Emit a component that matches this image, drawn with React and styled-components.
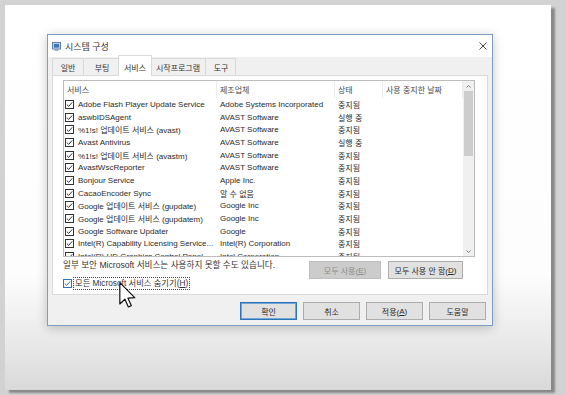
import React from "react";
import styled, { createGlobalStyle } from "styled-components";

const GlobalStyle = createGlobalStyle`
  html, body {
    margin: 0;
    padding: 0;
  }
  body {
    width: 565px;
    height: 395px;
    overflow: hidden;
    background: #d0d0d0;
    font-family: "Liberation Sans", "Noto Sans CJK KR", sans-serif;
  }
`;

const Screen = styled.div`
  width: 565px;
  height: 395px;
  box-sizing: border-box;
  padding: 5px 0 0 5px;
  background: #d2d2d2;
`;

const Page = styled.div`
  position: relative;
  width: 546px;
  height: 385px;
  box-sizing: border-box;
  padding: 29px 0 0 42px;
  background: linear-gradient(
    to bottom,
    #ffffff 0%,
    #fdfdfd 70%,
    #e6e6e6 90%,
    #d9d9d9 100%
  );
  box-shadow: 4px 3px 2px rgba(0, 0, 0, 0.35);
`;

const Dialog = styled.div`
  width: 446px;
  height: 292px;
  box-sizing: border-box;
  border: 1px solid #7f9dc3;
  background: #f0f0f0;
  box-shadow: 0 2px 10px rgba(0, 0, 0, 0.22);
  display: flex;
  flex-direction: column;
  font-size: 8px;
  color: #2a2a2a;
`;

const TitleBar = styled.div`
  height: 22px;
  flex: none;
  background: #fff;
  display: flex;
  align-items: center;
  gap: 4px;
  padding: 0 5px 0 4px;
`;

const Title = styled.span`
  flex: 1;
  font-size: 9px;
  color: #333;
`;

const Body = styled.div`
  flex: 1;
  display: flex;
  flex-direction: column;
  padding: 1px 4px 0;
`;

const TabStrip = styled.div`
  display: flex;
  align-items: flex-end;
  height: 20px;
  margin-top: -2px;
  margin-bottom: -1px;
  position: relative;
  z-index: 1;
`;

const Tab = styled.div`
  box-sizing: border-box;
  width: ${(p) => p.$w}px;
  height: ${(p) => (p.$active ? 21 : 17)}px;
  margin: 0 ${(p) => (p.$active ? -2 : 0)}px ${(p) => (p.$active ? 0 : 1)}px;
  padding-top: ${(p) => (p.$active ? 3 : 1)}px;
  display: flex;
  align-items: center;
  justify-content: center;
  background: ${(p) => (p.$active ? "#fff" : "#f0f0f0")};
  border: 1px solid #d9d9d9;
  border-bottom: none;
  border-left-color: ${(p) => (p.$active || p.$first ? "#d9d9d9" : "transparent")};
  position: relative;
  z-index: ${(p) => (p.$active ? 2 : 1)};
  color: #333;
`;

const TabPage = styled.div`
  height: 220px;
  box-sizing: border-box;
  background: #fff;
  border: 1px solid #d9d9d9;
  padding: 4px 12px 0 10px;
  display: flex;
  flex-direction: column;
`;

const ListBox = styled.div`
  height: 177px;
  box-sizing: border-box;
  border: 1px solid #bcbcbc;
  display: flex;
  overflow: hidden;
`;

const ListContent = styled.div`
  flex: 1;
  overflow: hidden;
`;

const Row = styled.div`
  display: grid;
  grid-template-columns: 153px 118px 48px 1fr;
  height: ${(p) => (p.$header ? 17 : 12.7)}px;
  align-items: center;
  white-space: nowrap;
  color: ${(p) => (p.$header ? "#4a4a4a" : "#2a2a2a")};
`;

const HeadCell = styled.div`
  height: 100%;
  display: flex;
  align-items: center;
  padding-left: 3px;
  border-right: 1px solid #ececec;
  box-sizing: border-box;
`;

const Cell = styled.div`
  display: flex;
  align-items: center;
  gap: 4px;
  padding-left: ${(p) => (p.$first ? 1 : 3)}px;
  overflow: hidden;
`;

const Scrollbar = styled.div`
  width: 11px;
  flex: none;
  background: #f0f0f0;
  display: flex;
  flex-direction: column;
  align-items: center;
`;

const Arrow = styled.div`
  height: 10px;
  width: 100%;
  display: flex;
  align-items: center;
  justify-content: center;
`;

const Thumb = styled.div`
  width: 9px;
  height: 65px;
  background: #cdcdcd;
`;

const Track = styled.div`
  flex: 1;
`;

const Controls = styled.div`
  display: grid;
  grid-template-columns: 1fr auto;
  margin-top: 3px;
`;

const Note = styled.div`
  font-size: 8.6px;
  line-height: 11px;
  color: #333;
`;

const HideRow = styled.div`
  display: flex;
  align-items: center;
  gap: 1px;
  margin-top: 6px;
  height: 13px;
`;

const FocusLabel = styled.span`
  border: 1px dotted #444;
  padding: 0 1px;
  font-size: 8.3px;
  line-height: 11px;
  color: #333;
`;

const ButtonGroup = styled.div`
  display: flex;
  gap: 7px;
  margin: 1px 12px 0 0;
  align-self: start;
`;

const Button = styled.div`
  box-sizing: border-box;
  width: ${(p) => p.$w}px;
  height: 18px;
  display: flex;
  align-items: center;
  justify-content: center;
  background: ${(p) => (p.$disabled ? "#cccccc" : "#e1e1e1")};
  border: 1px solid
    ${(p) => (p.$default ? "#2f74b5" : p.$disabled ? "#bfbfbf" : "#adadad")};
  box-shadow: ${(p) => (p.$default ? "inset 0 0 0 1px #6fa5d8" : "none")};
  color: ${(p) => (p.$disabled ? "#8b8b8b" : "#2a2a2a")};
  white-space: nowrap;
`;

const Footer = styled.div`
  display: flex;
  justify-content: flex-end;
  gap: 6px;
  padding: 7px 2px 0 0;
`;

const Cursor = styled.svg`
  position: absolute;
  left: 114px;
  top: 277px;
`;

const services = [
  ["Adobe Flash Player Update Service", "Adobe Systems Incorporated", "중지됨"],
  ["aswbIDSAgent", "AVAST Software", "실행 중"],
  ["%1!s! 업데이트 서비스 (avast)", "AVAST Software", "중지됨"],
  ["Avast Antivirus", "AVAST Software", "실행 중"],
  ["%1!s! 업데이트 서비스 (avastm)", "AVAST Software", "중지됨"],
  ["AvastWscReporter", "AVAST Software", "중지됨"],
  ["Bonjour Service", "Apple Inc.", "중지됨"],
  ["CacaoEncoder Sync", "알 수 없음", "중지됨"],
  ["Google 업데이트 서비스 (gupdate)", "Google Inc", "중지됨"],
  ["Google 업데이트 서비스 (gupdatem)", "Google Inc", "중지됨"],
  ["Google Software Updater", "Google", "중지됨"],
  ["Intel(R) Capability Licensing Service...", "Intel(R) Corporation", "중지됨"],
  ["Intel(R) HD Graphics Control Panel", "Intel Corporation", "중지됨"],
];

const tabs = [
  { label: "일반", w: 32 },
  { label: "부팅", w: 36 },
  { label: "서비스", w: 34, active: true },
  { label: "시작프로그램", w: 56 },
  { label: "도구", w: 30 },
];

const CheckBox = ({ hover }) => (
  <svg width="9" height="9" viewBox="0 0 9 9" style={{ flex: "none" }}>
    <rect
      x="0.5"
      y="0.5"
      width="8"
      height="8"
      fill="#fff"
      stroke={hover ? "#2a72c4" : "#333"}
    />
    <path
      d="M1.8 4.6 L3.7 6.4 L7.2 2.4"
      fill="none"
      stroke={hover ? "#2a72c4" : "#333"}
      strokeWidth="1"
    />
  </svg>
);

const AppIcon = () => (
  <svg width="9" height="9" viewBox="0 0 9 9">
    <rect x="0.5" y="0.5" width="8" height="6.5" fill="#dbe6f3" stroke="#5b7ea6" />
    <rect x="1.8" y="1.8" width="5.4" height="3.9" fill="#3f76b8" />
    <rect x="2.5" y="7.5" width="4" height="1.2" fill="#7d8b9b" />
  </svg>
);

const CloseIcon = () => (
  <svg width="8" height="8" viewBox="0 0 8 8">
    <path d="M0.5 0.5 L7.5 7.5 M7.5 0.5 L0.5 7.5" stroke="#333" strokeWidth="0.9" />
  </svg>
);

const Chevron = ({ down }) => (
  <svg width="5" height="3" viewBox="0 0 5 3">
    <path
      d={down ? "M0.5 0.5 L2.5 2.5 L4.5 0.5" : "M0.5 2.5 L2.5 0.5 L4.5 2.5"}
      fill="none"
      stroke="#707070"
      strokeWidth="0.9"
    />
  </svg>
);

const Key = ({ k }) => (
  <>
    (<u>{k}</u>)
  </>
);

const App = () => {
  return (
    <Screen>
      <GlobalStyle />
      <Page>
        <Dialog>
          <TitleBar>
            <AppIcon />
            <Title>시스템 구성</Title>
            <CloseIcon />
          </TitleBar>
          <Body>
            <TabStrip>
              {tabs.map((t, i) => (
                <Tab key={t.label} $w={t.w} $active={t.active} $first={i === 0}>
                  {t.label}
                </Tab>
              ))}
            </TabStrip>
            <TabPage>
              <ListBox>
                <ListContent>
                  <Row $header>
                    <HeadCell>서비스</HeadCell>
                    <HeadCell>제조업체</HeadCell>
                    <HeadCell>상태</HeadCell>
                    <HeadCell>사용 중지한 날짜</HeadCell>
                  </Row>
                  {services.map(([name, maker, state]) => (
                    <Row key={name}>
                      <Cell $first>
                        <CheckBox />
                        {name}
                      </Cell>
                      <Cell>{maker}</Cell>
                      <Cell>{state}</Cell>
                      <Cell />
                    </Row>
                  ))}
                </ListContent>
                <Scrollbar>
                  <Arrow>
                    <Chevron />
                  </Arrow>
                  <Thumb />
                  <Track />
                  <Arrow>
                    <Chevron down />
                  </Arrow>
                </Scrollbar>
              </ListBox>
              <Controls>
                <div>
                  <Note>일부 보안 Microsoft 서비스는 사용하지 못할 수도 있습니다.</Note>
                  <HideRow>
                    <CheckBox hover />
                    <FocusLabel>
                      모든 Microsoft 서비스 숨기기<Key k="H" />
                    </FocusLabel>
                  </HideRow>
                </div>
                <ButtonGroup>
                  <Button $w={72} $disabled>
                    모두 사용<Key k="E" />
                  </Button>
                  <Button $w={75}>
                    모두 사용 안 함<Key k="D" />
                  </Button>
                </ButtonGroup>
              </Controls>
            </TabPage>
            <Footer>
              <Button $w={57} $default>
                확인
              </Button>
              <Button $w={57}>취소</Button>
              <Button $w={57}>
                적용<Key k="A" />
              </Button>
              <Button $w={57}>도움말</Button>
            </Footer>
          </Body>
        </Dialog>
        <Cursor width="17" height="26" viewBox="-0.5 -0.5 12.5 19.5">
          <path
            d="M0 0 L0 16 L3.8 12.4 L6.4 18.2 L8.6 17.2 L6.1 11.6 L11.2 11.2 Z"
            fill="#fff"
            stroke="#111"
            strokeWidth="0.9"
            strokeLinejoin="round"
          />
        </Cursor>
      </Page>
    </Screen>
  );
};

export default App;
